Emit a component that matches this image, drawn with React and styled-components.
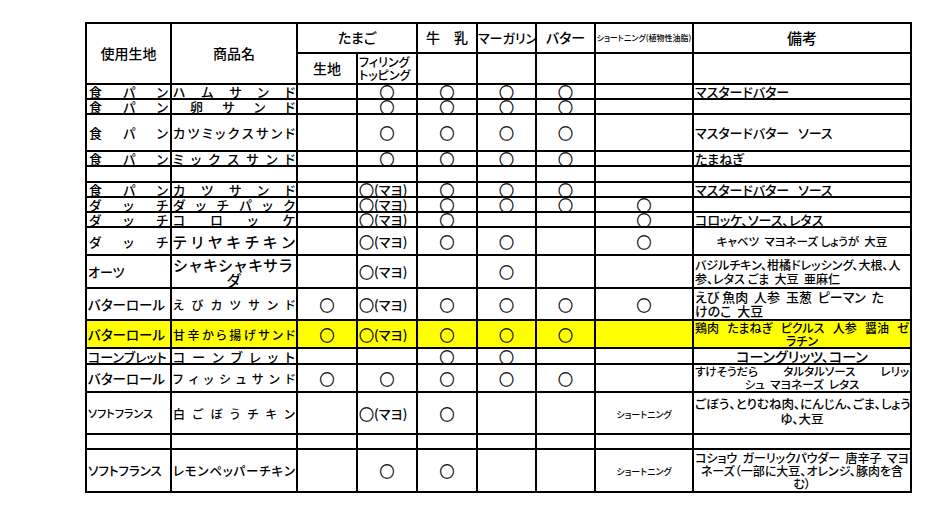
import React from 'react';
import styled, { createGlobalStyle } from 'styled-components';

const Global = createGlobalStyle`
  html, body { margin: 0; padding: 0; background: #fff; }
  body {
    font-family: "Noto Sans CJK JP", "Noto Sans", sans-serif;
    font-feature-settings: "palt";
    color: #000;
  }
`;

const Page = styled.div`
  padding: 22px 0 0 85px;
`;

const Sheet = styled.table`
  border-collapse: collapse;
  table-layout: fixed;
  width: 825px;
  border: 2px solid #000;
`;

const Row = styled.tr`
  height: ${p => p.$h}px;
  background: ${p => (p.$hl ? '#ffff00' : 'transparent')};
`;

const Head = styled.th`
  border: 2px solid #000;
  padding: 0 ${p => p.$px ?? 0}px;
  font-weight: 500;
  font-size: ${p => p.$size || 14}px;
  line-height: ${p => p.$lh || 1.1};
  text-align: ${p => p.$align || 'center'};
  vertical-align: middle;
  white-space: nowrap;
`;

const Cell = styled.td`
  border: 2px solid #000;
  padding: 0 ${p => p.$px ?? 1}px;
  font-weight: 500;
  font-size: ${p => p.$size || 13}px;
  line-height: ${p => p.$lh || 13}px;
  text-align: ${p => p.$align || 'left'};
  vertical-align: middle;
  white-space: pre;
  font-feature-settings: ${p => (p.$mono ? 'normal' : '"palt"')};
`;

const Spread = styled.div`
  display: flex;
  justify-content: space-between;
  align-items: center;
  padding: 0 ${p => p.$pr ?? 1}px 0 ${p => p.$pl ?? 1}px;
  font-size: ${p => p.$size || 13}px;
`;

const MarkBox = styled.div`
  display: flex;
  align-items: center;
  justify-content: ${p => (p.$left ? 'flex-start' : 'center')};
  height: 13px;
`;

const Circle = styled.span`
  display: block;
  font-weight: 700;
  font-size: 15px;
  line-height: 13px;
  height: 13px;
  font-feature-settings: normal;
  -webkit-text-stroke: 0.35px #000;
`;

const MarkCell = styled(Cell)`
  font-size: 13px;
`;

const SmallNote = styled.span`
  font-size: 9px;
`;

const Line = styled.div`
  text-align: ${p => p.$align || 'left'};
`;

const SpreadLine = styled.div`
  display: flex;
  justify-content: space-between;
`;

function Distributed({ text, size, pl, pr }) {
  return (
    <Spread $size={size} $pl={pl} $pr={pr}>
      {[...text].map((c, i) => (
        <span key={i}>{c}</span>
      ))}
    </Spread>
  );
}

function Mark({ v }) {
  if (!v) return <MarkCell />;
  if (v === 'mayo')
    return (
      <MarkCell $px={1}>
        <MarkBox $left>
          <Circle>○</Circle>
          <span>(マヨ)</span>
        </MarkBox>
      </MarkCell>
    );
  if (v === 'short')
    return (
      <MarkCell $align="center">
        <SmallNote>ショートニング</SmallNote>
      </MarkCell>
    );
  return (
    <MarkCell>
      <MarkBox>
        <Circle>○</Circle>
      </MarkBox>
    </MarkCell>
  );
}

const O = '○';

const rows = [
  { h: 15, base: { t: '食パン', s: true }, name: { t: 'ハムサンド', s: true }, m: ['', O, O, O, O, ''], note: { lines: ['マスタードバター'] } },
  { h: 15, base: { t: '食パン', s: true }, name: { t: '卵サンド', s: true, pl: 18 }, m: ['', O, O, O, O, ''], note: null },
  { h: 37, base: { t: '食パン', s: true }, name: { t: 'カツミックスサンド', s: true }, m: ['', O, O, O, O, ''], note: { lines: ['マスタードバター   ソース'] } },
  { h: 15, base: { t: '食パン', s: true }, name: { t: 'ミックスサンド', s: true }, m: ['', O, O, O, O, ''], note: { lines: ['たまねぎ'] } },
  { h: 16, empty: true },
  { h: 15, base: { t: '食パン', s: true }, name: { t: 'カツサンド', s: true }, m: ['', 'mayo', O, O, O, ''], note: { lines: ['マスタードバター   ソース'] } },
  { h: 15, base: { t: 'ダッチ', s: true }, name: { t: 'ダッチパック', s: true }, m: ['', 'mayo', O, O, O, O], note: null },
  { h: 15, base: { t: 'ダッチ', s: true }, name: { t: 'コロッケ', s: true }, m: ['', 'mayo', O, '', '', O], note: { lines: ['コロッケ、ソース、レタス'] } },
  { h: 28, base: { t: 'ダッチ', s: true }, name: { t: 'テリヤキチキン', s: true, size: 15 }, m: ['', 'mayo', O, O, '', O], note: { lines: ['キャベツ  マヨネーズ しょうが  大豆'], align: 'center', size: 11.5 } },
  { h: 33, base: { t: 'オーツ' }, name: { lines: ['シャキシャキサラ', 'ダ'], size: 15 }, m: ['', 'mayo', '', O, '', ''], note: { lines: ['バジルチキン、柑橘ドレッシング、大根、人', '参、レタス ごま  大豆  亜麻仁'], size: 12, lh: 14 } },
  { h: 32, base: { t: 'バターロール', size: 13.5 }, name: { t: 'えびカツサンド', s: true, size: 12 }, m: [O, 'mayo', O, O, O, O], note: { lines: ['えび 魚肉  人参  玉葱  ピーマン  た', 'けのこ  大豆'], size: 13, lh: 14 } },
  { h: 28, hl: true, base: { t: 'バターロール', size: 13.5 }, name: { t: '甘辛から揚げサンド', s: true, size: 12 }, m: [O, 'mayo', O, O, O, ''], note: { lines: ['鶏肉　たまねぎ　ピクルス　人参　醤油　ゼ', 'ラチン'], align: 'center', size: 12, lh: 13, spreadFirst: true } },
  { h: 16, base: { t: 'コーンブレット', size: 13 }, name: { t: 'コーンブレット', s: true, size: 13 }, m: ['', '', O, O, '', ''], note: { lines: ['コーングリッツ、コーン'], align: 'center', size: 14 } },
  { h: 27, base: { t: 'バターロール', size: 13.5 }, name: { t: 'フィッシュサンド', s: true, size: 12 }, m: [O, O, O, O, O, ''], note: { lines: ['すけそうだら　タルタルソース　　　　レリッ', 'シュ  マヨネーズ  レタス'], align: 'center', size: 11.5, lh: 13, spreadFirst: true } },
  { h: 42, base: { t: 'ソフトフランス', size: 11 }, name: { t: '白ごぼうチキン', s: true, size: 12 }, m: ['', 'mayo', O, '', '', 'short'], note: { lines: ['ごぼう、とりむね肉、にんじん、ごま、しょう', 'ゆ、大豆'], align: 'center', size: 12.5, lh: 15, top: true } },
  { h: 15, empty: true },
  { h: 43, base: { t: 'ソフトフランス', size: 12.5 }, name: { t: 'レモンペッパーチキン', s: true, size: 12.5 }, m: ['', O, O, '', '', 'short'], note: { lines: ['コショウ　ガーリックパウダー　唐辛子　マヨ', 'ネーズ（一部に大豆、オレンジ、豚肉を含', 'む）'], align: 'center', size: 12, lh: 13, spreadFirst: true } },
];

const TopCell = styled(Cell)`
  vertical-align: ${p => (p.$top ? 'top' : 'middle')};
  padding-top: ${p => (p.$top ? 3 : 0)}px;
`;

function NameCell({ d }) {
  if (d.lines)
    return (
      <Cell $size={d.size} $lh={15} $align="center" $mono>
        {d.lines.map((l, i) => (
          <Line key={i} $align={i === 0 ? 'left' : 'center'}>{l}</Line>
        ))}
      </Cell>
    );
  if (d.s)
    return (
      <Cell $px={0}>
        <Distributed text={d.t} size={d.size} pl={d.pl} pr={d.pr} />
      </Cell>
    );
  return <Cell $size={d.size}>{d.t}</Cell>;
}

function NoteCell({ n }) {
  if (!n) return <Cell />;
  return (
    <TopCell $size={n.size} $lh={n.lh} $align={n.align} $top={n.top}>
      {n.lines.map((l, i) =>
        n.spreadFirst && i === 0 && n.lines.length > 1 ? (
          <SpreadLine key={i}>
            {l
              .split(/\u3000+/)
              .filter(Boolean)
              .map((w, j) => (
                <span key={j}>{w}</span>
              ))}
          </SpreadLine>
        ) : (
          <Line key={i} $align={n.align}>{l}</Line>
        )
      )}
    </TopCell>
  );
}

export default function App() {
  return (
    <>
      <Global />
      <Page>
        <Sheet>
          <colgroup>
            <col style={{ width: 85 }} />
            <col style={{ width: 126 }} />
            <col style={{ width: 60 }} />
            <col style={{ width: 60 }} />
            <col style={{ width: 60 }} />
            <col style={{ width: 59 }} />
            <col style={{ width: 59 }} />
            <col style={{ width: 98 }} />
            <col style={{ width: 218 }} />
          </colgroup>
          <thead>
            <Row $h={30}>
              <Head rowSpan={2}>使用生地</Head>
              <Head rowSpan={2}>商品名</Head>
              <Head colSpan={2}>たまご</Head>
              <Head>牛　乳</Head>
              <Head $size={13}>マーガリン</Head>
              <Head>バター</Head>
              <Head $size={8}>ショートニング(植物性油脂)</Head>
              <Head $size={15}>備考</Head>
            </Row>
            <Row $h={31}>
              <Head>生地</Head>
              <Head $size={12} $lh={1.05} $align="left" $px={1}>
                フィリング
                <br />
                トッピング
              </Head>
              <Head />
              <Head />
              <Head />
              <Head />
              <Head />
            </Row>
          </thead>
          <tbody>
            {rows.map((r, i) =>
              r.empty ? (
                <Row key={i} $h={r.h}>
                  {Array.from({ length: 9 }).map((_, j) => (
                    <Cell key={j} />
                  ))}
                </Row>
              ) : (
                <Row key={i} $h={r.h} $hl={r.hl}>
                  {r.base.s ? (
                    <Cell $px={0}>
                      <Distributed text={r.base.t} size={r.base.size} pl={2} pr={2} />
                    </Cell>
                  ) : (
                    <Cell $size={r.base.size}>{r.base.t}</Cell>
                  )}
                  <NameCell d={r.name} />
                  {r.m.map((v, j) => (
                    <Mark key={j} v={v} />
                  ))}
                  <NoteCell n={r.note} />
                </Row>
              )
            )}
          </tbody>
        </Sheet>
      </Page>
    </>
  );
}
